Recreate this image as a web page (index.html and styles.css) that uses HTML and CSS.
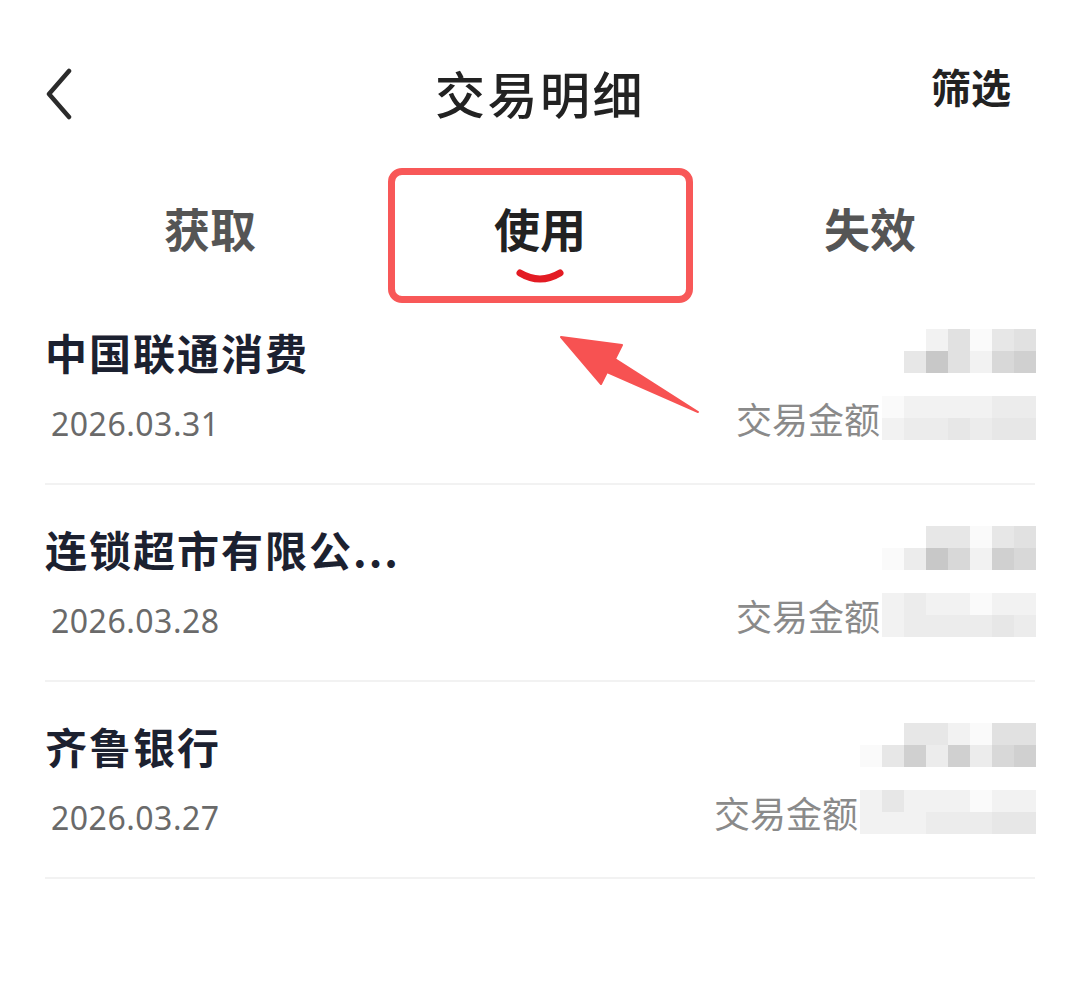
FILE: index.html
```html
<!DOCTYPE html>
<html lang="zh-CN">
<head>
<meta charset="utf-8">
<title>交易明细</title>
<link rel="stylesheet" href="styles.css">
</head>
<body>
<div class="page">
  <header class="nav">
    <div class="back">
      <svg width="40" height="52" viewBox="0 0 40 52"><path d="M29 3 L9 26 L29 49" fill="none" stroke="#2b2b2b" stroke-width="4.5" stroke-linecap="round" stroke-linejoin="round"/></svg>
    </div>
    <h1 class="title">交易明细</h1>
    <div class="filter">筛选</div>
  </header>

  <nav class="tabs">
    <div class="tab">获取</div>
    <div class="tab active">使用
      <svg class="ind" width="50" height="20" viewBox="0 0 50 20"><path d="M5 5 Q25 17 45 5" fill="none" stroke="#e31b23" stroke-width="7" stroke-linecap="round"/></svg>
    </div>
    <div class="tab">失效</div>
  </nav>

  <ul class="list">
    <li class="row">
      <div class="info">
        <div class="name">中国联通消费</div>
        <div class="date">2026.03.31</div>
      </div>
      <div class="amount">
        <div class="mosaic m6">
          <i></i><i class="b"></i><i class="e"></i><i class="a"></i><i class="d"></i><i class="e"></i>
          <i class="d"></i><i class="h"></i><i class="e"></i><i class="b"></i><i class="f"></i><i class="g"></i>
        </div>
        <div class="sum">
          <span class="label">交易金额</span>
          <div class="mosaic m7">
            <i class="a"></i><i class="b"></i><i class="b"></i><i class="b"></i><i class="b"></i><i class="c"></i><i class="c"></i>
            <i class="b"></i><i class="c"></i><i class="c"></i><i class="d"></i><i class="c"></i><i class="d"></i><i class="d"></i>
          </div>
        </div>
      </div>
    </li>
    <li class="row">
      <div class="info">
        <div class="name">连锁超市有限公...</div>
        <div class="date">2026.03.28</div>
      </div>
      <div class="amount">
        <div class="mosaic m7">
          <i></i><i></i><i class="d"></i><i class="d"></i><i class="a"></i><i class="d"></i><i class="e"></i>
          <i class="a"></i><i class="c"></i><i class="h"></i><i class="f"></i><i class="b"></i><i class="g"></i><i class="f"></i>
        </div>
        <div class="sum">
          <span class="label">交易金额</span>
          <div class="mosaic m7">
            <i class="b"></i><i class="c"></i><i class="b"></i><i class="b"></i><i class="a"></i><i class="b"></i><i class="b"></i>
            <i class="b"></i><i class="c"></i><i class="c"></i><i class="c"></i><i class="c"></i><i class="d"></i><i class="c"></i>
          </div>
        </div>
      </div>
    </li>
    <li class="row">
      <div class="info">
        <div class="name">齐鲁银行</div>
        <div class="date">2026.03.27</div>
      </div>
      <div class="amount">
        <div class="mosaic m8">
          <i></i><i></i><i class="d"></i><i class="d"></i><i class="b"></i><i class="a"></i><i class="e"></i><i class="e"></i>
          <i class="a"></i><i class="d"></i><i class="g"></i><i class="c"></i><i class="g"></i><i class="c"></i><i class="f"></i><i class="g"></i>
        </div>
        <div class="sum">
          <span class="label">交易金额</span>
          <div class="mosaic m8">
            <i class="b"></i><i class="d"></i><i class="b"></i><i class="b"></i><i class="b"></i><i class="a"></i><i class="b"></i><i class="b"></i>
            <i class="b"></i><i class="b"></i><i class="b"></i><i class="c"></i><i class="c"></i><i class="c"></i><i class="d"></i><i class="d"></i>
          </div>
        </div>
      </div>
    </li>
  </ul>

  <div class="annot-box"></div>
  <svg class="annot-arrow" width="1080" height="1001" viewBox="0 0 1080 1001">
    <polygon points="561,337 622,345 615,359 698,412 607,372 601,384" fill="#f75252" stroke="#f75252" stroke-width="2" stroke-linejoin="round"/>
  </svg>
</div>
</body>
</html>
```

FILE: styles.css
```css
* { box-sizing: border-box; }

html, body {
  margin: 0;
  padding: 0;
  background: #ffffff;
}

body {
  font-family: "Noto Sans CJK SC", "Noto Sans", sans-serif;
  color: #222222;
}

.page {
  position: relative;
  width: 1080px;
  height: 1001px;
  overflow: hidden;
}

/* ---------- header ---------- */
.nav {
  display: grid;
  grid-template-columns: 1fr auto 1fr;
  align-items: center;
  height: 160px;
  padding-top: 24px;
}

.back {
  justify-self: start;
  padding-left: 40px;
  display: flex;
  margin-top: 4px;
}

.title {
  margin: 0;
  font-size: 50px;
  font-weight: 500;
  letter-spacing: 2.5px;
  line-height: 60px;
  color: #222222;
}

.filter {
  justify-self: end;
  padding-right: 69px;
  font-size: 40px;
  font-weight: 700;
  line-height: 48px;
  color: #222222;
  margin-bottom: 12px;
}

/* ---------- tabs ---------- */
.tabs {
  display: grid;
  grid-template-columns: repeat(3, 1fr);
  padding: 0 45px;
  height: 128px;
}

.tab {
  display: flex;
  flex-direction: column;
  align-items: center;
  padding-top: 41px;
  font-size: 46px;
  font-weight: 700;
  line-height: 52px;
  color: #555555;
}

.tab.active {
  color: #222222;
}

.ind {
  margin-top: 15px;
}

/* ---------- list ---------- */
.list {
  list-style: none;
  margin: 0;
  padding: 0 45px;
}

.row {
  display: flex;
  justify-content: space-between;
  height: 197px;
  border-bottom: 2px solid #f2f2f2;
}

.info {
  padding-top: 39px;
}

.name {
  font-size: 42px;
  font-weight: 700;
  letter-spacing: 2px;
  line-height: 50px;
  color: #1c2130;
}

.date {
  margin-top: 27px;
  margin-left: 6px;
  font-family: "Noto Sans", "Noto Sans CJK SC", sans-serif;
  font-size: 32px;
  letter-spacing: 0.5px;
  line-height: 40px;
  color: #6a6a6a;
}

.amount {
  padding-top: 41px;
  display: flex;
  flex-direction: column;
  align-items: flex-end;
  margin-right: -1px;
}

.sum {
  margin-top: 23px;
  display: flex;
  align-items: center;
}

.label {
  font-size: 36px;
  line-height: 44px;
  color: #8a8a8a;
  margin-right: 2px;
}

.mosaic {
  display: grid;
  grid-auto-rows: 22px;
}

.mosaic.m6 { grid-template-columns: repeat(6, 22px); }
.mosaic.m7 { grid-template-columns: repeat(7, 22px); }
.mosaic.m8 { grid-template-columns: repeat(8, 22px); }

.mosaic i { display: block; }
.mosaic .a { background: #fafafa; }
.mosaic .b { background: #f2f2f2; }
.mosaic .c { background: #ececec; }
.mosaic .d { background: #e7e7e7; }
.mosaic .e { background: #e1e1e1; }
.mosaic .f { background: #d8d8d8; }
.mosaic .g { background: #d0d0d0; }
.mosaic .h { background: #c8c8c8; }

/* ---------- annotation overlay ---------- */
.annot-box {
  position: absolute;
  left: 388px;
  top: 168px;
  width: 305px;
  height: 135px;
  border: 7px solid #f85858;
  border-radius: 14px;
}

.annot-arrow {
  position: absolute;
  left: 0;
  top: 0;
  pointer-events: none;
}
```
